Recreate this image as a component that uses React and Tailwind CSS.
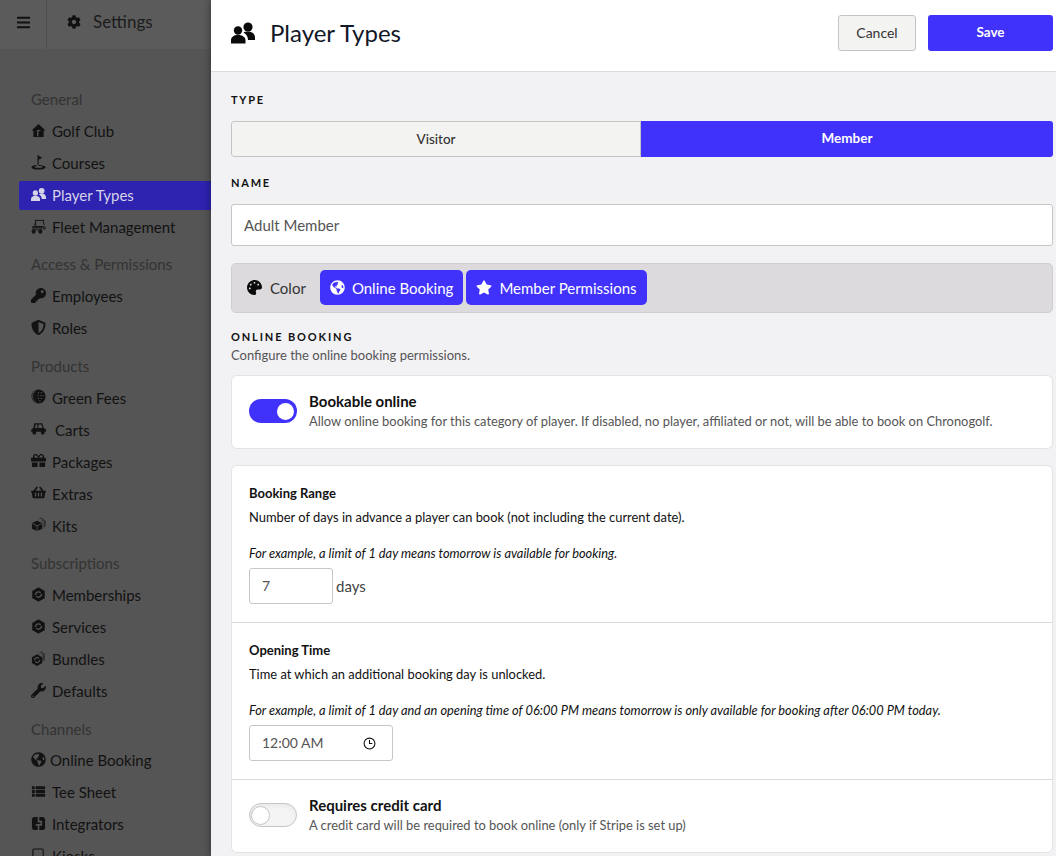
import { FaBars, FaCog, FaKey, FaShieldAlt, FaGift, FaShoppingBasket, FaWrench, FaGlobeAmericas, FaPalette, FaStar } from "react-icons/fa";
import { LuClock3 } from "react-icons/lu";

const FriendsIcon = ({ className }) => (
  <svg viewBox="0 0 24 22" className={className} fill="currentColor">
    <circle cx="17" cy="5" r="4.600" />
    <path d="M12.500 10.500c1.300-.8 2.800-1 4.500-1 4 0 7 2.200 7 6v2.500h-7c0-3-1.400-5.700-4.500-7.500z" />
    <circle cx="7" cy="8.500" r="4.200" />
    <path d="M0 21.500v-3.300C0 15 2.800 13 7 13s7.500 2 7.500 5.200v3.300z" />
  </svg>
);

const HouseIcon = ({ className }) => (
  <svg viewBox="0 0 16 16" className={className}>
    <path d="M8 1 15.500 8 13.500 8V15H2.500V8H.5z" fill="currentColor" />
    <path d="M6.500 14V7.500h4l-2.600 1.800V14z" fill="#555555" />
  </svg>
);

const FlagIcon = ({ className }) => (
  <svg viewBox="0 0 16 16" className={className} fill="currentColor">
    <path d="M7 0h1.200v1L12 3 8.200 5V11H7z" />
    <path d="M8.200 10.600c3.600.1 7.300.9 7.300 2.400 0 1.500-3.400 2.500-7.500 2.500S.5 14.500.5 13c0-1.100 2.200-2 5.300-2.300v1.200c-1.400.2-2.300.5-2.300.8 0 .5 2 1 4.500 1s4.500-.5 4.500-1-1.800-.9-4-1z" />
  </svg>
);

const FleetIcon = ({ className }) => (
  <svg viewBox="0 0 16 16" className={className} fill="none" stroke="currentColor" strokeWidth="1">
    <path d="M4 1.500h10M5 1.500v6M13 1.500l1 5M1.500 8h11.500M2 8.500h9v3H2z" />
    <path d="M3 9.500h7M3 5.500h2" />
    <circle cx="2.800" cy="13.500" r="1.700" fill="currentColor" />
    <circle cx="10" cy="13.500" r="1.700" fill="currentColor" />
    <circle cx="14" cy="9.500" r="1.300" />
  </svg>
);

const BallIcon = ({ className }) => (
  <svg viewBox="0 0 16 16" className={className}>
    <circle cx="8" cy="8" r="7.500" fill="currentColor" />
    <path d="M5 1.500a8 8 0 0 0 0 13" fill="none" stroke="#555555" strokeWidth=".8" />
    <g fill="#555555">
      <circle cx="8" cy="4" r=".7" /><circle cx="11" cy="4" r=".7" /><circle cx="7.500" cy="7" r=".7" />
      <circle cx="10.500" cy="7" r=".7" /><circle cx="13" cy="7" r=".7" /><circle cx="8" cy="10" r=".7" />
      <circle cx="11" cy="10" r=".7" /><circle cx="9.500" cy="12.800" r=".7" />
    </g>
  </svg>
);

const CartIcon = ({ className }) => (
  <svg viewBox="0 0 16 16" className={className} fill="currentColor">
    <path d="M3.500 2.500h8.500l1.500 5 2.500 1.500v2.500H.2V9L2.500 7.500zM5 3.700 4.200 7.500h2.600V3.700zm3 0v3.800h4.200l-1.100-3.800z" fillRule="evenodd" />
    <circle cx="3.500" cy="12.500" r="2" />
    <circle cx="12.500" cy="12.500" r="2" />
  </svg>
);

const CycleIcon = ({ className }) => (
  <svg viewBox="0 0 16 16" className={className}>
    <path d="M8 1l6 3.400v7.200L8 15l-6-3.400V4.400z" fill="currentColor" stroke="currentColor" strokeWidth="1.200" strokeLinejoin="round" />
    <path d="M4.700 8.500a3.300 3.300 0 0 1 5.600-2.300M11.300 7.500a3.300 3.300 0 0 1-5.600 2.300" fill="none" stroke="#555555" strokeWidth="1.500" />
  </svg>
);

const BundleIcon = ({ className }) => (
  <svg viewBox="0 0 16 16" className={className}>
    <path d="M9 2.500 11 1l3 2v7M11 3l2 1.500v6" fill="none" stroke="currentColor" strokeWidth=".7" />
    <path d="M6.500 3.500l5.500 3.100v6.200L6.500 16 1 12.800V6.600z" fill="currentColor" />
    <path d="M3.600 9.800a3 3 0 0 1 5-2M9.400 9.400a3 3 0 0 1-5 2" fill="none" stroke="#555555" strokeWidth="1.200" />
  </svg>
);

const ListIcon = ({ className }) => (
  <svg viewBox="0 0 16 16" className={className} fill="currentColor">
    <path d="M1 2.500h3v3H1zM5 2.500h10v3H5zM1 6.500h3v3H1zM5 6.500h10v3H5zM1 10.500h3v3H1zM5 10.500h10v3H5z" />
  </svg>
);

const IntegratorIcon = ({ className }) => (
  <svg viewBox="0 0 16 16" className={className}>
    <rect x="1" y="1" width="14" height="14" rx="3" fill="currentColor" />
    <path d="M8 1v5h3v3.500H8V15" fill="none" stroke="#555555" strokeWidth="1.700" />
    <path d="M5 9.500h3" stroke="#555555" strokeWidth="1.700" />
  </svg>
);

const KioskIcon = ({ className }) => (
  <svg viewBox="0 0 16 16" className={className} fill="none" stroke="currentColor" strokeWidth="1.200">
    <rect x="2" y="1" width="11" height="13" rx="1.500" />
  </svg>
);

const KitIcon = ({ className }) => (
  <svg viewBox="0 0 16 16" className={className}>
    <path d="M9 2 11 1l4 3v6M11 3l3 2v6" fill="none" stroke="currentColor" strokeWidth=".7" />
    <path d="M6.500 4l5.500 2.500v6L6.500 15 1 12.500v-6z" fill="currentColor" />
    <path d="M1.500 7l5 2.500L11.500 7M6.500 9.500V15" fill="none" stroke="#555555" strokeWidth=".9" />
  </svg>
);

const nav = [
  {
    title: "General",
    items: [
      ["Golf Club", HouseIcon],
      ["Courses", FlagIcon],
      ["Player Types", FriendsIcon, true],
      ["Fleet Management", FleetIcon],
    ],
  },
  {
    title: "Access & Permissions",
    items: [
      ["Employees", FaKey],
      ["Roles", FaShieldAlt],
    ],
  },
  {
    title: "Products",
    items: [
      ["Green Fees", BallIcon],
      ["Carts", CartIcon, false, "ml-[9px]"],
      ["Packages", FaGift],
      ["Extras", FaShoppingBasket],
      ["Kits", KitIcon],
    ],
  },
  {
    title: "Subscriptions",
    items: [
      ["Memberships", CycleIcon],
      ["Services", CycleIcon],
      ["Bundles", BundleIcon],
      ["Defaults", FaWrench],
    ],
  },
  {
    title: "Channels",
    items: [
      ["Online Booking", FaGlobeAmericas, false, "ml-1"],
      ["Tee Sheet", ListIcon],
      ["Integrators", IntegratorIcon],
      ["Kiosks", KioskIcon],
    ],
  },
];

const NavItem = ({ label, Icon, active, shift }) => (
  <div
    className={
      "h-8 flex items-center " + (active ? "text-[#d5d3e8]" : "text-[#121212]")
    }
  >
    <div
      className={
        "w-full h-[29px] pl-3 flex items-center rounded-l-[2px] " +
        (active ? "bg-[#2e22b0]" : "")
      }
    >
      <Icon className="w-[15px] h-[15px] shrink-0 -mt-0.5" />
      <span className={"text-[15px] " + (shift || "ml-1.5")}>{label}</span>
    </div>
  </div>
);

const Sidebar = () => (
  <aside className="w-[211px] shrink-0 bg-[#555555] overflow-hidden">
    <div className="h-[49px] pb-[5px] bg-[#5b5b5b] flex items-center text-[#111111]">
      <div className="w-[47px] h-[49px] -mb-[5px] pb-[5px] flex items-center justify-center border-r border-[#4d4d4d]">
        <FaBars className="w-[15px] h-[15px]" />
      </div>
      <FaCog className="ml-5 w-[14px] h-[14px]" />
      <span className="ml-3 text-[17px] text-[#1c1c1c]">Settings</span>
    </div>
    <nav className="pl-[19px] pt-[38px]">
      {nav.map((group) => (
        <div key={group.title} className="mb-[9.4px]">
          <div className="pl-3 h-6 text-[15px] leading-6 text-[#333333] mb-1">{group.title}</div>
          {group.items.map(([label, Icon, active, shift]) => (
            <NavItem key={label} label={label} Icon={Icon} active={active} shift={shift} />
          ))}
        </div>
      ))}
    </nav>
  </aside>
);

const Label = ({ children, className }) => (
  <div className={"text-[11px] leading-4 font-bold text-[#111111] " + (className || "tracking-[0.16em]")}>
    {children}
  </div>
);

const Toggle = ({ on }) => (
  <div
    className={
      "w-12 h-6 shrink-0 rounded-full flex items-center " +
      (on
        ? "bg-[#4032fa] justify-end pr-[3px]"
        : "bg-[#f4f4f4] border border-[#c6c6c6] pl-[1px] shadow-inner")
    }
  >
    <div className={"rounded-full bg-white " + (on ? "w-[17px] h-[17px]" : "w-[19px] h-[19px] border border-[#c6c6c6]")} />
  </div>
);

const ToolbarButton = ({ Icon, iconClass, children }) => (
  <div className="h-[35px] px-2.5 pt-[2px] flex items-center gap-[7px] rounded-[5px] bg-[#4032fa] text-white text-[15px]">
    <Icon className={iconClass + " h-[15px] -mt-[2px]"} />
    {children}
  </div>
);

export default function App() {
  return (
    <div className="flex h-[856px] w-[1056px] overflow-hidden font-['Lato','Open_Sans',sans-serif]">
      <Sidebar />
      <main className="flex-1 min-w-0 bg-[#f2f1f4] shadow-[0_0_8px_rgba(0,0,0,0.45)] z-10">
        <header className="h-[72px] pb-[6px] bg-white border-b border-[#dcdadd] pl-5 pr-[3px] flex items-center">
          <FriendsIcon className="w-6 h-[22px] text-[#0a0a0a]" />
          <h1 className="ml-[15px] text-2xl text-[#111827]">Player Types</h1>
          <div className="ml-auto flex gap-3">
            <button className="w-[78px] h-9 rounded-[3px] border border-[#c4c4c4] bg-[#f3f4f2] text-sm text-[#333333]">
              Cancel
            </button>
            <button className="w-[125px] h-9 rounded-[3px] bg-[#4032fa] text-[13.500px] font-bold text-white">
              Save
            </button>
          </div>
        </header>

        <div className="pl-5 pr-[3px] pt-5">
          <Label>TYPE</Label>
          <div className="mt-[13px] h-9 flex rounded-[3px] overflow-hidden text-[13.500px] leading-[34px]">
            <div className="w-[410px] flex justify-center bg-[#f3f4f2] border border-[#c4c4c4] rounded-l-[3px] font-medium text-[#333333]">
              Visitor
            </div>
            <div className="flex-1 flex justify-center bg-[#4032fa] font-bold text-white">
              Member
            </div>
          </div>

          <Label className="mt-[18px] tracking-[0.16em]">NAME</Label>
          <input
            readOnly
            value="Adult Member"
            className="mt-[13px] w-full h-[42px] px-3 bg-white border border-[#c6c6c6] rounded-[3px] text-[15px] text-[#555555] outline-none"
          />

          <div className="mt-[17px] h-[50px] px-[7px] pb-[2px] flex items-center gap-[3px] bg-[#dcdadd] border border-[#cfcdd0] rounded-[5px] text-[15px]">
            <div className="flex items-center gap-2 pl-2 pr-[11px] pt-[2px] text-[#333333]">
              <FaPalette className="w-[15px] h-[15px] -mt-[2px] text-[#0a0a0a]" />
              Color
            </div>
            <ToolbarButton Icon={FaGlobeAmericas} iconClass="w-[15px]">Online Booking</ToolbarButton>
            <ToolbarButton Icon={FaStar} iconClass="w-4">Member Permissions</ToolbarButton>
          </div>

          <Label className="mt-4 tracking-[0.17em]">ONLINE BOOKING</Label>
          <p className="mt-0.5 text-[13px] leading-4 text-[#555555]">Configure the online booking permissions.</p>

          <section className="mt-3 h-[74px] px-[17px] pb-[2px] flex items-center gap-3 bg-white border border-[#e3e2e5] rounded-[6px]">
            <Toggle on />
            <div>
              <div className="mb-[2px] text-[15px] leading-[18px] font-bold text-[#111111]">Bookable online</div>
              <div className="text-[12.900px] leading-[18px] text-[#555555]">
                Allow online booking for this category of player. If disabled, no player, affiliated or not, will be able to book on Chronogolf.
              </div>
            </div>
          </section>

          <section className="mt-4 bg-white border border-[#e3e2e5] rounded-[6px] text-[13px] text-[#111111]">
            <div className="h-[157px] px-[17px] pt-[18px] border-b border-[#dcdadd]">
              <div className="leading-[18px] font-bold">Booking Range</div>
              <div className="mt-[6px] leading-[18px] text-[12.900px]">Number of days in advance a player can book (not including the current date).</div>
              <div className="mt-[18px] leading-[18px] italic text-[12.800px]">For example, a limit of 1 day means tomorrow is available for booking.</div>
              <div className="mt-[6px] flex items-center gap-[3px] text-[15px] text-[#444444]">
                <div className="w-[84px] h-9 px-3 flex items-center border border-[#c6c6c6] rounded-[3px] text-sm text-[#555555]">7</div>
                days
              </div>
            </div>
            <div className="h-[157px] px-[17px] pt-[18px] border-b border-[#dcdadd]">
              <div className="leading-[18px] font-bold">Opening Time</div>
              <div className="mt-[6px] leading-[18px] text-[12.900px]">Time at which an additional booking day is unlocked.</div>
              <div className="mt-[18px] leading-[18px] italic text-[12.800px]">
                For example, a limit of 1 day and an opening time of 06:00 PM means tomorrow is only available for booking after 06:00 PM today.
              </div>
              <div className="mt-[6px] w-36 h-9 pl-3 pr-4 flex items-center justify-between border border-[#c6c6c6] rounded-[3px] text-sm text-[#555555]">
                12:00 AM
                <LuClock3 className="w-[13px] h-[13px] text-[#111111]" />
              </div>
            </div>
            <div className="h-[72px] px-[17px] pb-[2px] flex items-center gap-3">
              <Toggle />
              <div>
                <div className="mb-[2px] text-[15px] leading-[18px] font-bold">Requires credit card</div>
                <div className="text-[12.900px] leading-[18px] text-[#555555]">A credit card will be required to book online (only if Stripe is set up)</div>
              </div>
            </div>
          </section>
        </div>
      </main>
    </div>
  );
}
